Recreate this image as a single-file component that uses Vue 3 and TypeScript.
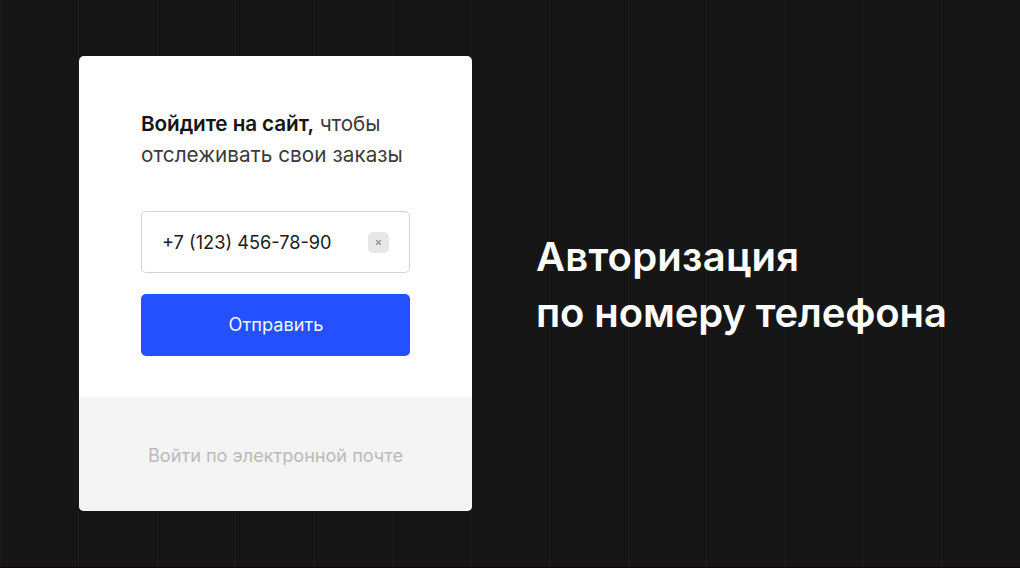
<script setup lang="ts">
const columns: number = 13
const phone: string = '+7 (123) 456-78-90'
</script>

<template>
  <main class="page">
    <div class="grid"><i v-for="n in columns" :key="n"></i></div>
    <section class="card">
      <form class="form" @submit.prevent>
        <p class="intro"><b>Войдите на сайт,</b> чтобы<br /><span class="second">отслеживать свои заказы</span></p>
        <div class="field">
          <span>{{ phone }}</span>
          <button class="clear" type="button" aria-label="Очистить">
            <svg width="7" height="7" viewBox="0 0 7 7"><path d="M1.2 1.2 5.8 5.8M5.8 1.2 1.2 5.8" /></svg>
          </button>
        </div>
        <button class="submit" type="submit">Отправить</button>
      </form>
      <footer class="alt">Войти по электронной почте</footer>
    </section>
    <h1 class="title"><span class="first">Авторизация</span><br />по номеру телефона</h1>
  </main>
</template>

<style>
body { margin: 0; background: #161616; }
</style>

<style scoped>
.page { position: relative; box-sizing: border-box; width: 1020px; height: 568px; overflow: hidden; display: flex; align-items: flex-start; padding: 56px 0 0 79px; background: #161616; border-bottom: 1px solid #0d080a; font-family: Inter, sans-serif; }
.grid { position: absolute; inset: 0; display: flex; border-left: 1px solid #1b1b1b; }
.grid i { box-sizing: border-box; flex: 0 0 78.45px; border-right: 1px solid #1c1c1c; }
.card { position: relative; width: 393px; height: 455px; border-radius: 5px; overflow: hidden; background: #fff; display: flex; flex-direction: column; }
.form { box-sizing: border-box; height: 341px; padding: 52px 62px 0; }
.intro { margin: 0 0 41px; font-size: 20.7px; line-height: 31px; color: #3a3a3a; white-space: nowrap; letter-spacing: -0.09px; }
.intro b { font-weight: 600; color: #141414; }
.second { letter-spacing: 0.05px; }
.field { box-sizing: border-box; height: 62px; border: 1px solid #d3d3d3; border-radius: 5px; padding: 0 20px; display: flex; align-items: center; justify-content: space-between; font-size: 18.2px; color: #1b1b1b; }
.clear { width: 21px; height: 21px; padding: 0; border: 0; border-radius: 5px; background: #e7e7e7; display: grid; place-items: center; }
.clear svg { display: block; }
.clear path { stroke: #7f7f7f; stroke-width: 1.1; fill: none; }
.submit { display: block; width: 100%; height: 62px; margin-top: 21px; padding: 0 0 2px 1px; border: 0; border-radius: 5px; background: #2351ff; color: #f4f6ff; font: 18.2px Inter, sans-serif; }
.alt { box-sizing: border-box; flex: 1; padding-top: 2px; background: #f3f3f3; color: #bababa; font-size: 18.1px; display: flex; align-items: center; justify-content: center; }
.title { position: relative; margin: 173px 0 0 64px; font-size: 40px; line-height: 56px; font-weight: 600; color: #fff; white-space: nowrap; letter-spacing: -0.12px; }
.first { letter-spacing: 0.22px; }
</style>
